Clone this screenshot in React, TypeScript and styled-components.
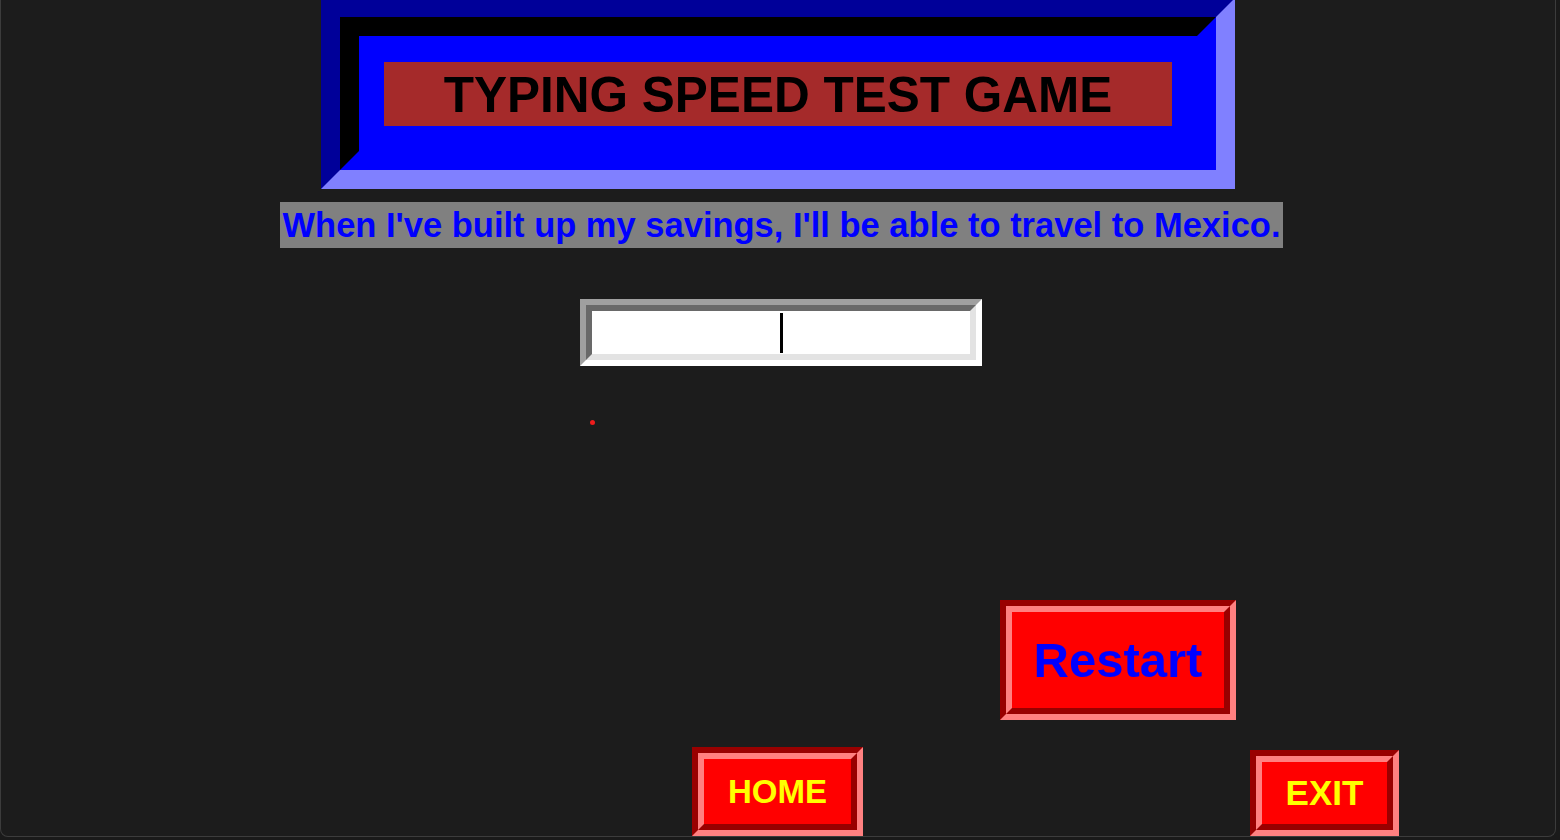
import React from "react";
import styled, { createGlobalStyle } from "styled-components";

const Global = createGlobalStyle`
  html, body { margin: 0; padding: 0; background: #1a1a1a; }
  body { font-family: "Liberation Sans", Arial, sans-serif; overflow: hidden; }
`;

const Window = styled.div`
  box-sizing: border-box;
  width: 1556px;
  height: 837px;
  background: #1c1c1c;
  border: 1px solid #3c3c3c;
  border-top: none;
  border-radius: 0 0 8px 8px;
  overflow: hidden;
  display: flex;
  flex-direction: column;
  align-items: center;
`;

const TitleFrame = styled.div`
  box-sizing: border-box;
  margin-top: -2px;
  width: 914px;
  border: 19px solid;
  border-color: #000099 #8080ff #8080ff #000099;
`;

const TitleInner = styled.div`
  border: 19px solid;
  border-color: #000000 #0000ff #0000ff #000000;
  background: #0000ff;
  padding: 26px 25px 25px 25px;
`;

const TitleLabel = styled.div`
  height: 64px;
  background: #a52a2a;
  display: flex;
  align-items: center;
  justify-content: center;
  font-weight: bold;
  font-size: 49.5px;
  color: #000;
  white-space: nowrap;
`;

const Sentence = styled.div`
  margin-top: 13px;
  margin-left: 7px;
  height: 46px;
  padding: 0 3px;
  background: #808080;
  color: #0000ff;
  font-weight: bold;
  font-size: 34.5px;
  display: flex;
  align-items: center;
  white-space: nowrap;
`;

const EntryOuter = styled.div`
  box-sizing: border-box;
  margin-top: 51px;
  margin-left: 6px;
  width: 402px;
  height: 67px;
  border: 6px solid;
  border-color: #a0a0a0 #ffffff #ffffff #a0a0a0;
`;

const EntryInner = styled.div`
  box-sizing: border-box;
  height: 100%;
  border: 6px solid;
  border-color: #696969 #e3e3e3 #e3e3e3 #696969;
  background: #fff;
  display: flex;
  align-items: center;
  justify-content: center;
`;

const Caret = styled.span`
  width: 3px;
  height: 40px;
  background: #000;
`;

const Feedback = styled.div`
  align-self: flex-start;
  margin-top: 54px;
  margin-left: 589px;
  width: 5px;
  height: 5px;
  border-radius: 50%;
  background: #ee1c1c;
`;

const BevelButton = styled.div<{ $w: number; $h: number }>`
  box-sizing: border-box;
  width: ${(p) => p.$w}px;
  height: ${(p) => p.$h}px;
  border: 6px solid;
  border-color: #990000 #ff8080 #ff8080 #990000;
`;

const BevelFace = styled.div<{ $color: string; $size: number }>`
  box-sizing: border-box;
  height: 100%;
  border: 6px solid;
  border-color: #ff8080 #990000 #990000 #ff8080;
  background: #ff0000;
  color: ${(p) => p.$color};
  font-weight: bold;
  font-size: ${(p) => p.$size}px;
  display: flex;
  align-items: center;
  justify-content: center;
  white-space: nowrap;
`;

const RestartRow = styled.div`
  align-self: flex-start;
  margin-top: 175px;
  margin-left: 999px;
`;

const BottomRow = styled.div`
  align-self: flex-start;
  margin-top: 27px;
  margin-left: 691px;
  display: flex;
  align-items: flex-end;
  gap: 387px;
`;

export default function App() {
  return (
    <>
      <Global />
      <Window>
        <TitleFrame>
          <TitleInner>
            <TitleLabel>TYPING SPEED TEST GAME</TitleLabel>
          </TitleInner>
        </TitleFrame>
        <Sentence>When I've built up my savings, I'll be able to travel to Mexico.</Sentence>
        <EntryOuter>
          <EntryInner>
            <Caret />
          </EntryInner>
        </EntryOuter>
        <Feedback />
        <RestartRow>
          <BevelButton $w={236} $h={120}>
            <BevelFace $color="#0000ff" $size={49}>Restart</BevelFace>
          </BevelButton>
        </RestartRow>
        <BottomRow>
          <BevelButton $w={171} $h={89}>
            <BevelFace $color="#ffff00" $size={33}>HOME</BevelFace>
          </BevelButton>
          <BevelButton $w={149} $h={86}>
            <BevelFace $color="#ffff00" $size={35}>EXIT</BevelFace>
          </BevelButton>
        </BottomRow>
      </Window>
    </>
  );
}
